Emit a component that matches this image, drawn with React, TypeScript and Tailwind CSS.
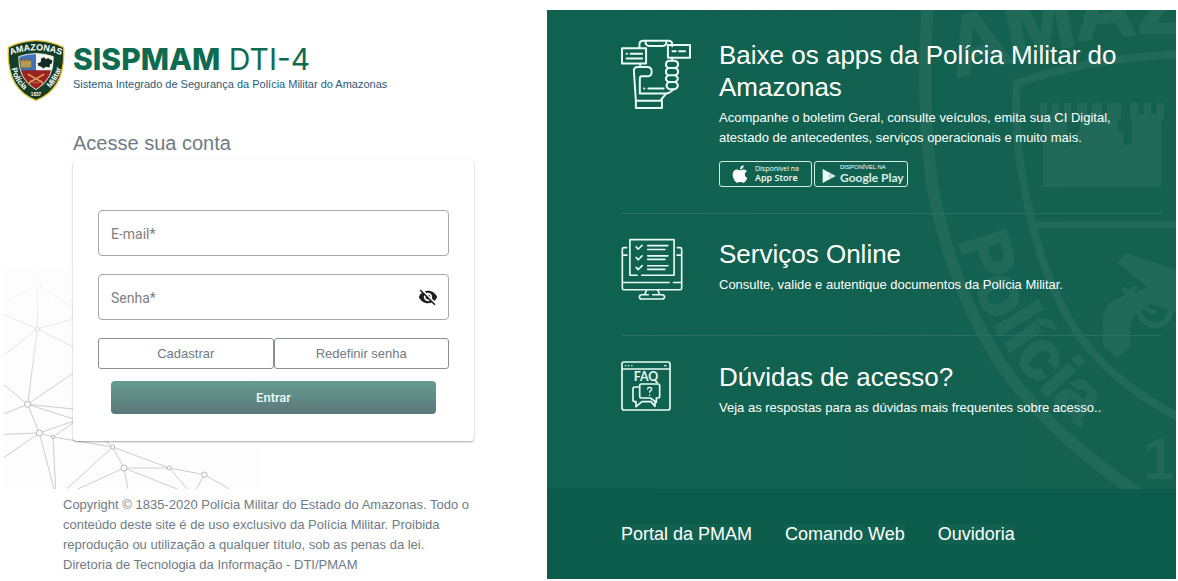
import type { ReactNode } from "react";
import { FaApple } from "react-icons/fa";
import { MdVisibilityOff } from "react-icons/md";

const sans = "font-['Liberation_Sans',Arial,sans-serif]";

function Crest() {
  return (
    <svg viewBox="0 0 174 184" className="h-[61px] w-[58px] shrink-0" role="img" aria-label="Brasão da Polícia Militar do Amazonas">
      <defs>
        <path id="crest-top" d="M10 46 Q87 16 164 46" />
        <path id="crest-left" d="M13 86 Q22 132 66 162" />
        <path id="crest-right" d="M110 162 Q152 132 163 84" />
        <clipPath id="crest-clip">
          <path d="M35 50 Q87 32 139 50 Q142 118 87 150 Q32 118 35 50Z" />
        </clipPath>
      </defs>
      <path d="M4 22 Q46 2 87 2 Q128 2 170 22 Q178 148 87 182 Q-4 148 4 22Z" fill="#1d2f1f" stroke="#d9c530" strokeWidth="4" />
      <path d="M9 26 Q48 8 87 8 Q126 8 165 26 Q171 144 87 175 Q3 144 9 26Z" fill="#12402a" />
      <g clipPath="url(#crest-clip)">
        <path d="M26 30h61v62H26z" fill="#3f74c0" />
        <path d="M87 30h60v62H87z" fill="#f7f7f2" />
        <path d="M26 92h122v70H26z" fill="#9c1f22" />
      </g>
      <path d="M35 50 Q87 32 139 50 Q142 118 87 150 Q32 118 35 50Z" fill="none" stroke="#e9ead8" strokeWidth="3" />
      <path d="M38 58h5v4h4v-4h5v4h5v-6h5v6h4v-4h5v4h3v22H40V66h-2z" fill="#b79a52" stroke="#5b4d2c" strokeWidth="1.5" />
      <path d="M92 70l9-3 2-12 9-3 5 6 7-4 5 5 7 2-1 9-6 4-1 9-11-2-8 5-6-5-9-3z" fill="#142a24" />
      <g stroke="#d5a05a" strokeWidth="5" fill="none" strokeLinecap="round">
        <path d="M64 104l36 20q8 2 6 9" />
        <path d="M110 104l-36 20q-8 2-6 9" />
        <path d="M77 127q4 8 9 1M97 127q-4 8-9 1" strokeWidth="2.5" />
      </g>
      <g fill="#fff" fontFamily="'Liberation Sans', Arial, sans-serif" fontWeight="700">
        <text fontSize="27"><textPath href="#crest-top" startOffset="50%" textAnchor="middle">AMAZONAS</textPath></text>
        <text fontSize="24"><textPath href="#crest-left">Polícia</textPath></text>
        <text fontSize="24"><textPath href="#crest-right" startOffset="100%" textAnchor="end">Militar</textPath></text>
        <text fontSize="14" x="87" y="170" textAnchor="middle">1837</text>
      </g>
    </svg>
  );
}

function Network() {
  return (
    <svg viewBox="12 24 768 660" className="pointer-events-none absolute bottom-0 left-1 h-[220px] w-[256px]" aria-hidden="true">
      <defs>
        <linearGradient id="net-fade" x1="0" y1="0" x2="0" y2="1">
          <stop offset="0" stopColor="#fdfdfd" />
          <stop offset="1" stopColor="#fdfdfd" stopOpacity="0" />
        </linearGradient>
      </defs>
      <path d="M12 24h768v660H12z" fill="#fdfdfd" />
      <g stroke="#cdcdcd" strokeWidth="3" fill="none">
        <path d="M104 30l8 42v132L83 430l35 86 44 168M112 72L12 126M112 72l128 80M112 204L12 160M112 204L12 282M112 204l128-36M112 204l128 64M83 430l157-108M83 430L12 372M83 430L12 458M83 430l157 16M83 430l150 48M118 516l-106 4M118 516L12 590M118 516l122-42M118 516l41 12 8 156M159 528l81-56M159 528l179 30-138 126M338 558l-34-28M338 558l34 63 12 63M338 558l170 63 105 20 76 43M372 621h136l54 63M372 621l-138 63M372 621l162 64M613 641l-24 43" />
      </g>
      <g fill="#fff" stroke="#b8b8b8" strokeWidth="3">
        <circle cx="112" cy="72" r="10" />
        <circle cx="112" cy="204" r="6" />
        <circle cx="83" cy="430" r="9" />
        <circle cx="118" cy="516" r="9" />
        <circle cx="159" cy="528" r="5" />
        <circle cx="338" cy="558" r="6" />
        <circle cx="372" cy="621" r="9" />
        <circle cx="508" cy="621" r="6" />
        <circle cx="613" cy="641" r="8" />
      </g>
      <path d="M12 24h768v380H12z" fill="url(#net-fade)" />
    </svg>
  );
}

function Watermark() {
  return (
    <svg viewBox="910 10 266 479" className="pointer-events-none absolute top-0 right-0 h-[479px] w-[266px]" aria-hidden="true">
      <defs>
        <path id="wm-left" d="M959 240 C972 300 1018 386 1110 450" />
      </defs>
      <g fill="none" stroke="#216a5a">
        <path d="M928 4C924 60 922 130 935 200C950 270 975 325 1003 367C1035 412 1080 455 1142 496" strokeWidth="12" />
        <path d="M1180 54C1120 57 1065 66 1017 83C1014 130 1020 170 1029 210C1040 265 1062 313 1085 343C1110 375 1145 400 1180 418" strokeWidth="8" />
        <path d="M1032 225h150" strokeWidth="7" />
        <circle cx="1155" cy="309" r="16" strokeWidth="6" />
        <path d="M1139 300q6 12 18 12" strokeWidth="4" />
      </g>
      <g fill="#216a5a">
        <path d="M1040 103H1047V114H1052V103H1059V114H1064V103H1071V118L1067 122V145H1076V132H1080V118L1077 114V103H1087V114H1092V103H1102V114H1107V103H1121V118L1118 122V132H1123V145H1132V122L1130 118V103H1138V114H1144V103H1151V114H1157V103H1164V118L1161 122V187H1043V122L1040 118Z" />
        <path d="M1118 263L1125 253L1176 270V312L1150 304L1134 316Q1130 322 1130 332V344Q1130 350 1121 353A4 4 0 1 1 1113 353Q1103 350 1103 342V318Q1104 308 1113 300L1126 295L1121 290L1124 287L1129 290L1136 285L1138 288L1132 293L1148 287Z" />
      </g>
      <g fill="#216a5a" stroke="#216a5a" strokeWidth="2" fontFamily="'Liberation Sans', Arial, sans-serif" fontWeight="700">
        <text fontSize="84" transform="translate(956 78) rotate(-16)">A</text>
        <text fontSize="84" transform="translate(1010 58) rotate(-11)">M</text>
        <text fontSize="84" transform="translate(1077 40) rotate(-5)">A</text>
        <text fontSize="84" x="1138" y="33">Z</text>
        <text fontSize="70"><textPath href="#wm-left">Polícia</textPath></text>
        <text fontSize="57" x="1143" y="479" strokeWidth="0">18</text>
      </g>
    </svg>
  );
}

const lineIcon = { fill: "none", stroke: "#e9fbf5", strokeWidth: 6, strokeLinejoin: "round" as const, strokeLinecap: "round" as const };

function AppsIcon() {
  return (
    <svg viewBox="62 40 212 212" className="h-[70px] w-[70px]" aria-hidden="true" {...lineIcon}>
      <path d="M118 66V56q0-11 11-11h77q11 0 11 11v6M136 46q0 15 12 15h40q12 0 12-15" />
      <path d="M65 68h73v46H65z" />
      <path d="M79 85h1M91 85h35M79 99h47" />
      <path d="M204 58h67v39h-67z" />
      <path d="M218 77h10M238 77h18M217 97v10" />
      <path d="M120 115v10" />
      <path d="M107 227l-6-91q0-11 12-11h28q14 0 14 14t-14 14h-16q-6 0-6 7v45h78q11 0 19-8l4-5" />
      <path d="M132 190h1M145 190h46" />
      <path d="M206 106h20q9 3 9 11t-9 11h-20q-8-3-8-11t8-11zM206 128h20q9 3 9 11t-9 11h-20q-8-3-8-11t8-11zM206 150h20q8 3 8 10t-8 10h-20q-8-3-8-10t8-10zM209 170h16q9 3 9 11t-9 11h-16q-9-3-9-11t9-11z" />
      <path d="M107 227h74l17-21M107 227v22h79v-27" />
    </svg>
  );
}

function MonitorIcon() {
  return (
    <svg viewBox="62 50 186 188" className="h-[62px] w-[62px]" aria-hidden="true" {...lineIcon} strokeWidth={5}>
      <path d="M110 163H88V55h134v108h-98" />
      <path d="M78 79h-8q-5 0-5 5v118q0 5 5 5h170q5 0 5-5V84q0-5-5-5h-8M65 102h14M245 102h-14M65 185h142M220 185h25" />
      <path d="M107 77l6 7 12-12M107 109l6 7 12-12M107 139l6 7 12-12M142 73h61M142 85h52M142 104h61M142 115h52M142 134h61M142 145h52" />
      <path d="M138 208l-5 14M173 208l5 14M144 222h-20q-7 0-7 7t7 6h62q7 0 7-6t-7-7h-29" />
    </svg>
  );
}

function FaqIcon() {
  return (
    <svg viewBox="62 420 150 150" className="h-[50px] w-[50px]" aria-hidden="true" {...lineIcon} strokeWidth={5}>
      <rect x="65" y="423" width="144" height="144" rx="6" />
      <path d="M65 444h144M75 434h1M84 434h1M94 434h1M193 434h4" strokeWidth="4" />
      <path d="M117 498h-14q-5 0-5 5v34q0 5 5 5h4v15l18-15h27l12 14v-14" />
      <path d="M123 489h50q5 0 5 5v32q0 5-5 5h-5v13l-18-13h-27q-5 0-5-5v-32q0-5 5-5z" />
      <path d="M142 504q0-5 6-5t6 5q0 4-6 8v2M148 522v1" strokeWidth="4" />
      <text x="137" y="480" textAnchor="middle" fontSize="37" fontWeight="700" fontFamily="Lato, sans-serif" fill="#e9fbf5" stroke="none">FAQ</text>
    </svg>
  );
}

function Item({ icon, title, text, className, children }: { icon: ReactNode; title: string; text: string; className: string; children?: ReactNode }) {
  return (
    <article className={`flex ${className}`}>
      <div className="w-[98px] shrink-0">{icon}</div>
      <div className="min-w-0 flex-1">
        <h2 className="text-[26px] leading-[32px]">{title}</h2>
        <p className="mt-[5px] max-w-[420px] text-[13px] leading-[20px]">{text}</p>
        {children}
      </div>
    </article>
  );
}

function Field({ id, type, label, children }: { id: string; type: string; label: string; children?: ReactNode }) {
  return (
    <div className="relative font-['Roboto',sans-serif] text-[14px]">
      <input
        id={id}
        type={type}
        placeholder=" "
        required
        className="peer block h-[46px] w-full rounded-[4px] border border-[#a9a9ab] bg-transparent pr-10 pl-3 text-gray-800"
      />
      <label
        htmlFor={id}
        className="pointer-events-none absolute top-[14px] left-[13px] leading-[20px] text-[#808080] peer-[:not(:placeholder-shown)]:top-[-10px] peer-[:not(:placeholder-shown)]:bg-white"
      >
        {label}
      </label>
      {children}
    </div>
  );
}

const badge = "flex h-[26px] items-center rounded-[3px] border border-[#d5ece5]";

export default function App() {
  return (
    <div className={`grid min-h-screen grid-cols-[547fr_629fr] bg-white pt-[10px] pr-[2px] pb-[2px] ${sans}`}>
      <main className="flex flex-col text-[#6f7b84]">
        <div className="relative pt-[30px] pb-[48px]">
          <Network />
          <header className="relative flex gap-2 pl-[7px]">
            <Crest />
            <div className="pt-[3px]">
              <h1 className="font-['Inter',sans-serif] text-[30px] leading-[32px] whitespace-nowrap text-[#0f6b50]">
                <span className="font-extrabold">SISPMAM</span> <span className="font-normal">DTI-4</span>
              </h1>
              <p className="mt-px text-[11px] leading-[16px] whitespace-nowrap text-[#2b5b78]">
                Sistema Integrado de Segurança da Polícia Militar do Amazonas
              </p>
            </div>
          </header>
          <section className="relative mt-[30px] px-[73px]">
            <h2 className="text-[20px] leading-[24px]">Acesse sua conta</h2>
            <form className="mt-[5px] rounded-[4px] bg-white px-[25px] pt-[50px] pb-[27px] shadow-[0_1px_2px_rgba(0,0,0,0.35)]" onSubmit={(e) => e.preventDefault()}>
              <div className="flex flex-col gap-[18px]">
                <Field id="email" type="email" label="E-mail*" />
                <Field id="senha" type="password" label="Senha*">
                  <button type="button" aria-label="Mostrar senha" className="absolute inset-y-0 right-[11px] my-auto h-5 text-[20px] text-[#202020]">
                    <MdVisibilityOff />
                  </button>
                </Field>
              </div>
              <div className="mt-[18px] grid grid-cols-2 text-[13px]">
                <button type="button" className="h-[31px] rounded-[3px] border border-[#8b8f94]">Cadastrar</button>
                <button type="button" className="h-[31px] rounded-[3px] border border-[#8b8f94]">Redefinir senha</button>
              </div>
              <div className="mt-[12px] px-[13px]">
                <button type="submit" className="block h-[33px] w-full rounded-[4px] bg-linear-to-b from-[#639d90] to-[#5c777a] font-['Roboto',sans-serif] text-[13px] font-medium text-[#eefaf6]">
                  Entrar
                </button>
              </div>
            </form>
          </section>
        </div>
        <footer className="px-[63px] pt-[6px]">
          <p className="text-[13px] leading-[20px]">
            Copyright © 1835-2020 Polícia Militar do Estado do Amazonas. Todo o conteúdo deste site é de uso exclusivo da Polícia Militar. Proibida reprodução ou utilização a qualquer título, sob as penas da lei.
            <br />
            Diretoria de Tecnologia da Informação - DTI/PMAM
          </p>
        </footer>
      </main>

      <aside className="flex flex-col bg-[#0b5c4b] text-white">
        <div className="relative overflow-hidden bg-linear-to-r from-[#0f6250] to-[#156150] pt-[29px] pr-[14px] pb-[71px] pl-[74px]">
          <Watermark />
          <div className="relative divide-y divide-[#2a7062]">
            <Item
              className="pb-[26px]"
              icon={<AppsIcon />}
              title="Baixe os apps da Polícia Militar do Amazonas"
              text="Acompanhe o boletim Geral, consulte veículos, emita sua CI Digital, atestado de antecedentes, serviços operacionais e muito mais."
            >
              <div className="mt-[13px] flex gap-[2px]">
                <a href="#app-store" className={`${badge} w-[93px] pl-[10px]`}>
                  <FaApple className="mr-[5px] text-[20px]" />
                  <span className="flex flex-col font-['Open_Sans',sans-serif] whitespace-nowrap">
                    <span className="text-[7px] leading-[8px]">Disponível na</span>
                    <span className="text-[9px] leading-[10px] font-semibold">App Store</span>
                  </span>
                </a>
                <a href="#google-play" className={`${badge} w-[94px] pl-[7px]`}>
                  <svg viewBox="0 0 40 42" className="mt-1 mr-[4px] h-[14px] w-[14px]" fill="#e9fbf5" aria-hidden="true">
                    <path d="M1 0L40 21L1 42z" />
                    <path d="M28 14l-6 7 6 7" fill="none" stroke="#116150" strokeWidth="1.5" />
                  </svg>
                  <span className="flex flex-col whitespace-nowrap">
                    <span className="text-[6px] leading-[7px]">DISPONÍVEL NA</span>
                    <span className="font-['Lato',sans-serif] text-[12px] leading-[13px] font-bold text-[#d9efe8]">Google Play</span>
                  </span>
                </a>
              </div>
            </Item>
            <Item
              className="pt-[24px] pb-[35px]"
              icon={<MonitorIcon />}
              title="Serviços Online"
              text="Consulte, valide e autentique documentos da Polícia Militar."
            />
            <Item
              className="pt-[25px]"
              icon={<FaqIcon />}
              title="Dúvidas de acesso?"
              text="Veja as respostas para as dúvidas mais frequentes sobre acesso.."
            />
          </div>
        </div>
        <nav className="flex flex-1 items-center gap-[33px] pl-[74px] text-[18px] leading-[20px]">
          <a href="#portal" className="bg-[#116150]">Portal da PMAM</a>
          <a href="#comando" className="bg-[#116150]">Comando Web</a>
          <a href="#ouvidoria" className="bg-[#116150]">Ouvidoria</a>
        </nav>
      </aside>
    </div>
  );
}
